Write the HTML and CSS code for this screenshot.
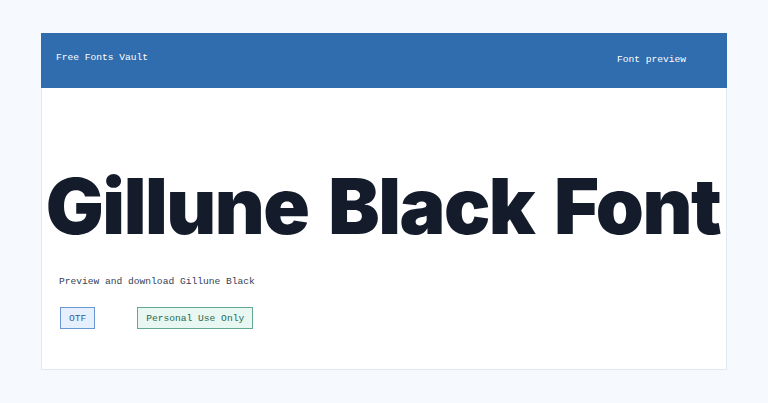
FILE: index.html
```html
<!DOCTYPE html>
<html lang="en">
<head>
<meta charset="utf-8">
<title>Gillune Black Font — Free Fonts Vault</title>
<link rel="stylesheet" href="styles.css">
</head>
<body>
<div class="card">
  <header class="topbar">
    <span class="brand">Free Fonts Vault</span>
    <span class="nav">Font preview</span>
  </header>
  <main class="content">
    <h1 class="specimen">Gillune Black Font</h1>
    <p class="desc">Preview and download Gillune Black</p>
    <div class="tags">
      <span class="tag tag-format">OTF</span>
      <span class="tag tag-license">Personal Use Only</span>
    </div>
  </main>
</div>
</body>
</html>
```
FILE: styles.css
```css
html, body {
  margin: 0;
  padding: 0;
}
body {
  background: #f6f9fe;
  font-family: "Liberation Mono", "DejaVu Sans Mono", monospace;
}
.card {
  margin: 33px 0 0 41px;
  width: 686px;
  height: 337px;
  box-sizing: border-box;
  background: #ffffff;
  border: 1px solid #e2e8f0;
  border-top: none;
  display: flex;
  flex-direction: column;
}
.topbar {
  height: 55px;
  margin: 0 -1px;
  background: #2f6daf;
  color: #ffffff;
  display: flex;
  justify-content: space-between;
  align-items: center;
  padding: 0 41px 0 15px;
  font-size: 9.6px;
}
.brand {
  margin-top: -6px;
}
.nav {
  margin-top: -3px;
}
.content {
  padding: 0 16px;
}
.specimen {
  margin: 78px -16px 0;
  font-family: Inter, "Noto Sans", sans-serif;
  font-weight: 900;
  font-size: 77px;
  letter-spacing: -1.5px;
  word-spacing: 6px;
  line-height: 80px;
  color: #141b2b;
  white-space: nowrap;
  text-align: center;
  padding-right: 2px;
}
.desc {
  margin: 30px 0 0;
  padding-left: 1px;
  font-size: 9.6px;
  color: #334155;
}
.tags {
  display: flex;
  gap: 42px;
  margin-top: 20px;
  padding-left: 2px;
}
.tag {
  font-size: 9.6px;
  height: 22px;
  box-sizing: border-box;
  display: inline-flex;
  align-items: center;
  padding: 0 8px;
  border: 1px solid;
}
.tag-format {
  background: #e6effc;
  border-color: #6b98d3;
  color: #2c5da6;
}
.tag-license {
  background: #e8f7f1;
  border-color: #65a991;
  color: #1d6a52;
}
```
